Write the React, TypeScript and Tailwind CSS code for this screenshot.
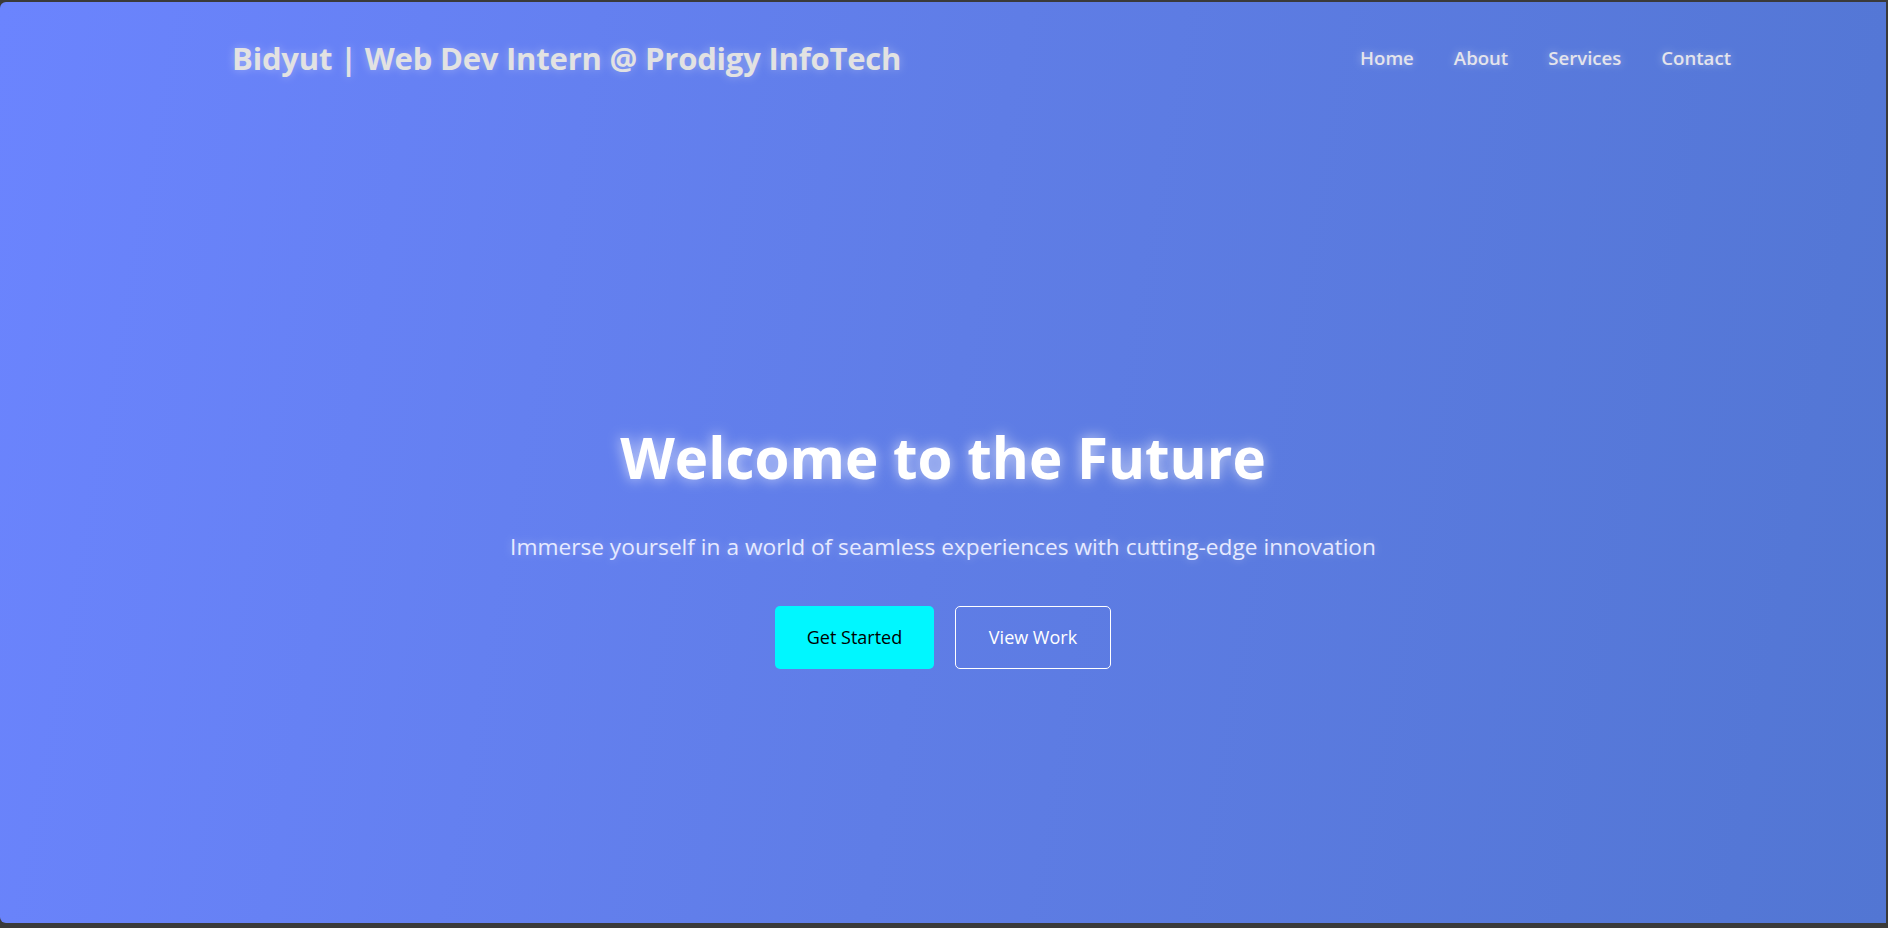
const links = ["Home", "About", "Services", "Contact"];

export default function App() {
  return (
    <div className="h-[928px] w-full bg-[#3a3a3a] pt-[2px] pr-[2px] pb-[5px] font-['Segoe_UI','Open_Sans',sans-serif]">
      <div className="flex h-full flex-col rounded-l-[6px] bg-[linear-gradient(100deg,#6b84fe_0%,#5f7de6_50%,#5276d3_100%)]">
        <header className="flex h-[112px] items-center justify-between pl-[232px] pr-[155px]">
          <h1 className="text-[31px] font-bold tracking-[-0.2px] text-[#e2e2e2] [text-shadow:0_0_10px_rgba(255,255,255,0.35)]">
            Bidyut | Web Dev Intern @ Prodigy InfoTech
          </h1>
          <nav className="flex items-center gap-[40px]">
            {links.map((l) => (
              <a
                key={l}
                href="#"
                className="text-[18.6px] font-semibold text-[#e4e4ec] [text-shadow:0_0_8px_rgba(255,255,255,0.45)]"
              >
                {l}
              </a>
            ))}
          </nav>
        </header>

        <main className="flex flex-1 flex-col items-center justify-center pt-[55px] text-center">
          <h2 className="text-[56.5px] font-bold leading-[70px] text-white [text-shadow:0_0_14px_rgba(255,255,255,0.7)]">
            Welcome to the Future
          </h2>
          <p className="mt-[38px] text-[22.7px] leading-[32px] text-[#e6eaff] [text-shadow:0_0_8px_rgba(255,255,255,0.35)]">
            Immerse yourself in a world of seamless experiences with cutting-edge innovation
          </p>
          <div className="mt-[43px] flex gap-[21px]">
            <button className="h-[63px] w-[159px] rounded-[5px] bg-[#00f7ff] text-[18px] text-black">
              Get Started
            </button>
            <button className="h-[63px] w-[156px] rounded-[5px] border border-white text-[18px] text-white">
              View Work
            </button>
          </div>
        </main>
      </div>
    </div>
  );
}
